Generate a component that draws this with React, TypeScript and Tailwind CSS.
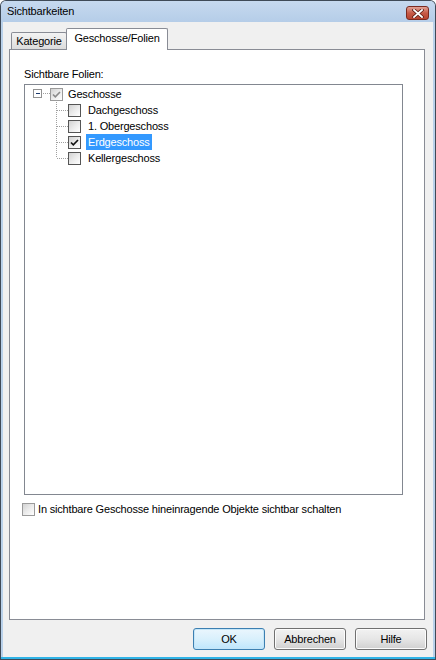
import React from "react";

function Box({ checked, dim }: { checked?: boolean; dim?: boolean }) {
  return (
    <span
      className={`flex h-[13px] w-[13px] shrink-0 items-center justify-center border ${
        dim ? "border-[#9a9a9a]" : "border-[#555555]"
      } bg-gradient-to-br from-[#d2d2d2] via-[#ebebeb] to-[#ffffff]`}
    >
      {checked && (
        <svg width="11" height="11" viewBox="0 0 11 11">
          <path
            d="M2 5.5 L4.3 7.8 L9 3"
            fill="none"
            stroke={dim ? "#8a8a8a" : "#111111"}
            strokeWidth="1.6"
          />
        </svg>
      )}
    </span>
  );
}

function Connector({ last }: { last?: boolean }) {
  return (
    <svg width="43" height="16" className="shrink-0" shapeRendering="crispEdges">
      <line x1="31.5" y1="0" x2="31.5" y2={last ? 8 : 16} stroke="#a0a0a0" strokeDasharray="1 1" />
      <line x1="32" y1="8.5" x2="43" y2="8.5" stroke="#a0a0a0" strokeDasharray="1 1" />
    </svg>
  );
}

function Button({ label, primary }: { label: string; primary?: boolean }) {
  return (
    <div
      className={`flex h-[22px] w-[72px] items-center justify-center rounded-[3px] border ${
        primary
          ? "border-[#3c7fb1] bg-gradient-to-b from-[#eaf6fd] via-[#d9f0fc] to-[#bee6fd] shadow-[inset_0_0_0_1px_#c5e6f8]"
          : "border-[#707070] bg-gradient-to-b from-[#f2f2f2] via-[#e6e6e6] to-[#d0d0d0] shadow-[inset_0_0_0_1px_#fcfcfc]"
      }`}
    >
      {label}
    </div>
  );
}

const children = ["Dachgeschoss", "1. Obergeschoss", "Erdgeschoss", "Kellergeschoss"];

export default function App() {
  return (
    <div className="h-[660px] w-[436px] rounded-t-[6px] bg-[#3f4a57] p-px font-['Liberation_Sans',Arial,sans-serif] text-[11px] leading-[13px] tracking-[-0.18px] text-black">
      <div className="flex h-full flex-col rounded-t-[5px] bg-[#b9d1ea]">
        {/* title bar */}
        <div className="flex h-[21px] shrink-0 items-center justify-between rounded-t-[5px] bg-gradient-to-b from-[#c6d9ef] to-[#b5cde8] pl-[6px] pr-[6px]">
          <span className="text-[11px]">Sichtbarkeiten</span>
          <div className="mt-[3px] flex h-[14px] w-[23px] items-center justify-center rounded-[3px] border border-[#7a2a20] bg-gradient-to-b from-[#e0a195] via-[#c75a47] to-[#b8432f]">
            <svg width="12" height="9" viewBox="0 0 12 9">
              <path d="M2 1 L10 8 M10 1 L2 8" stroke="#5c1c14" strokeWidth="3.4" strokeLinecap="square" />
              <path d="M2 1 L10 8 M10 1 L2 8" stroke="#ffffff" strokeWidth="1.8" strokeLinecap="square" />
            </svg>
          </div>
        </div>

        {/* client area */}
        <div className="mx-[2px] flex flex-1 flex-col bg-[#f0f0f0] pt-[6px]">
          {/* tabs */}
          <div className="flex h-[21px] items-end pl-[8px]">
            <div className="flex h-[17px] w-[56px] items-center justify-center rounded-t-[2px] border-x border-t border-[#898c95] bg-gradient-to-b from-[#f3f3f3] to-[#dcdcdc] pt-[1px]">
              Kategorie
            </div>
            <div className="relative z-10 -mb-px -ml-px flex h-[22px] w-[102px] items-center justify-center rounded-t-[2px] border-x border-t border-[#898c95] bg-white pb-[2px]">
              Geschosse/Folien
            </div>
          </div>

          {/* panel */}
          <div className="ml-[6px] flex h-[571px] w-[416px] flex-col border border-[#898c95] bg-white pl-[14px] pt-[18px]">
            <div>Sichtbare Folien:</div>
            <div className="mt-[3px] h-[411px] w-[379px] border border-[#828790] bg-white pt-[1px]">
              <div className="flex h-[16px] items-center">
                <svg width="25" height="16" className="shrink-0" shapeRendering="crispEdges">
                  <rect x="8.5" y="3.5" width="8" height="8" fill="#ffffff" stroke="#919191" />
                  <line x1="10.5" y1="7.5" x2="15" y2="7.5" stroke="#1d3b6e" />
                  <line x1="18" y1="7.5" x2="25" y2="7.5" stroke="#a0a0a0" strokeDasharray="1 1" />
                </svg>
                <Box checked dim />
                <span className="ml-[3px] px-[2px]">Geschosse</span>
              </div>
              {children.map((c, i) => (
                <div key={c} className="flex h-[16px] items-center">
                  <Connector last={i === children.length - 1} />
                  <Box checked={c === "Erdgeschoss"} />
                  <span
                    className={`ml-[5px] flex h-[16px] items-center px-[2px] ${
                      c === "Erdgeschoss" ? "bg-[#3399ff] text-white" : ""
                    }`}
                  >
                    {c}
                  </span>
                </div>
              ))}
            </div>
            <div className="-ml-[2px] mt-[8px] flex items-center gap-[3px]">
              <Box dim />
              <span>In sichtbare Geschosse hineinragende Objekte sichtbar schalten</span>
            </div>
          </div>

          {/* buttons */}
          <div className="mt-[8px] flex justify-end gap-[9px] pr-[6px]">
            <Button label="OK" primary />
            <Button label="Abbrechen" />
            <Button label="Hilfe" />
          </div>
        </div>
        <div className="h-[2px] shrink-0 bg-[#2fb3e6]" />
      </div>
    </div>
  );
}
